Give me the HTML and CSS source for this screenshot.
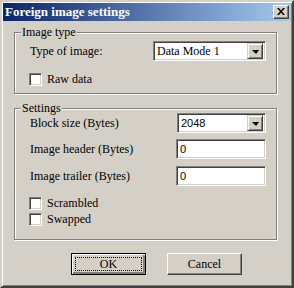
FILE: index.html
```html
<!DOCTYPE html>
<html lang="en">
<head>
  <meta charset="UTF-8" />
  <title>Foreign image settings</title>
  <link rel="stylesheet" href="styles.css">
</head>
<body>
  <div class="window">
    <div class="title-bar">
      <span class="title">Foreign image settings</span>
      <button class="close-btn" aria-label="Close">
        <svg width="8" height="7" viewBox="0 0 8 7"><path d="M0 0h2l2 2.5L6 0h2L5 3.5 8 7H6L4 4.5 2 7H0l3-3.5z" fill="#000"/></svg>
      </button>
    </div>

    <div class="content">
      <div class="group group-type">
        <div class="legend">Image type</div>
        <div class="row row-first">
          <span class="label">Type of image:</span>
          <div class="combo combo-wide">
            <span class="combo-value serif">Data Mode 1</span>
            <span class="combo-btn"><span class="arrow"></span></span>
          </div>
        </div>
        <label class="check check-raw"><span class="box"></span>Raw data</label>
      </div>

      <div class="group group-settings">
        <div class="legend">Settings</div>
        <div class="row row-block">
          <span class="label">Block size (Bytes)</span>
          <div class="combo">
            <span class="combo-value">2048</span>
            <span class="combo-btn"><span class="arrow"></span></span>
          </div>
        </div>
        <div class="row row-header">
          <span class="label">Image header (Bytes)</span>
          <div class="field">0</div>
        </div>
        <div class="row row-trailer">
          <span class="label">Image trailer (Bytes)</span>
          <div class="field">0</div>
        </div>
        <label class="check check-scrambled"><span class="box"></span>Scrambled</label>
        <label class="check check-swapped"><span class="box"></span>Swapped</label>
      </div>

      <div class="buttons">
        <button class="btn btn-default"><span class="focus">OK</span></button>
        <button class="btn">Cancel</button>
      </div>
    </div>
  </div>
</body>
</html>
```

FILE: styles.css
```css
:root {
  --face: #d4d0c8;
  --shadow: #808080;
  --dark: #404040;
  --light: #ffffff;
}

html, body {
  margin: 0;
  padding: 0;
  background: var(--face);
}

body {
  font-family: "Liberation Serif", "Times New Roman", serif;
  font-size: 12px;
  color: #000;
}

.window {
  width: 294px;
  height: 288px;
  box-sizing: border-box;
  background: var(--face);
  border: 2px solid;
  border-color: var(--face) var(--dark) var(--dark) var(--face);
  box-shadow: inset 1px 1px 0 var(--light), inset -1px -1px 0 var(--shadow);
  padding: 1px;
}

.title-bar {
  height: 18px;
  display: flex;
  align-items: center;
  justify-content: space-between;
  padding: 0 2px;
  background: linear-gradient(to right, #0a246a, #a6caf0);
}

.title {
  color: #fff;
  font-weight: bold;
  font-size: 13px;
  line-height: 18px;
  white-space: nowrap;
}

.close-btn {
  width: 16px;
  height: 14px;
  box-sizing: border-box;
  padding: 0;
  margin: 0;
  display: flex;
  align-items: center;
  justify-content: center;
  background: var(--face);
  border: 1px solid;
  border-color: var(--light) var(--dark) var(--dark) var(--light);
  box-shadow: inset -1px -1px 0 var(--shadow);
}

.close-btn svg {
  display: block;
  margin: 0 1px 1px 0;
}

.content {
  padding: 11px 14px 0 11px;
}

.group {
  border: 1px solid var(--shadow);
  box-shadow: inset 1px 1px 0 var(--light), 1px 1px 0 var(--light);
  box-sizing: border-box;
}

.group-type {
  height: 62px;
}

.group-settings {
  height: 132px;
  margin-top: 14px;
}

.legend {
  display: table;
  height: 14px;
  line-height: 14px;
  margin: -8px 0 -6px 6px;
  padding: 0 1px;
  background: var(--face);
}

.row {
  display: flex;
  align-items: center;
  justify-content: space-between;
  height: 20px;
  padding: 0 10px 0 15px;
}

.row-first { margin-top: 8px; }
.row-block { margin-top: 4px; }
.row-header { margin-top: 6px; }
.row-trailer { margin-top: 7px; }

.label {
  white-space: nowrap;
}

.combo, .field {
  height: 20px;
  box-sizing: border-box;
  background: #fff;
  border: 1px solid;
  border-color: var(--shadow) var(--light) var(--light) var(--shadow);
  box-shadow: inset 1px 1px 0 var(--dark), inset -1px -1px 0 var(--face);
  display: flex;
  align-items: center;
}

.combo {
  width: 89px;
  padding: 2px;
}

.combo-wide {
  width: 113px;
}

.combo-value, .field {
  font-family: "Liberation Sans", Arial, sans-serif;
  font-size: 11px;
}

.combo-value {
  flex: 1;
  padding-left: 1px;
}

.combo-value.serif {
  font-family: "Liberation Serif", "Times New Roman", serif;
  font-size: 12px;
}

.combo-btn {
  width: 16px;
  height: 16px;
  box-sizing: border-box;
  background: var(--face);
  border: 1px solid;
  border-color: var(--face) var(--dark) var(--dark) var(--face);
  box-shadow: inset 1px 1px 0 var(--light), inset -1px -1px 0 var(--shadow);
  display: flex;
  align-items: center;
  justify-content: center;
}

.arrow {
  width: 0;
  height: 0;
  border-left: 4px solid transparent;
  border-right: 3px solid transparent;
  border-top: 4px solid #000;
  margin-top: 1px;
}

.field {
  width: 90px;
  padding: 0 3px;
}

.check {
  display: flex;
  align-items: center;
  height: 13px;
  padding-left: 14px;
  white-space: nowrap;
}

.check-raw { margin-top: 12px; }
.check-scrambled { margin-top: 11px; }
.check-swapped { margin-top: 3px; }

.box {
  width: 13px;
  height: 13px;
  box-sizing: border-box;
  background: #fff;
  border: 1px solid;
  border-color: var(--shadow) var(--light) var(--light) var(--shadow);
  box-shadow: inset 1px 1px 0 var(--dark), inset -1px -1px 0 var(--face);
  margin-right: 5px;
  flex-shrink: 0;
}

.buttons {
  display: flex;
  gap: 21px;
  margin-top: 13px;
  padding-left: 57px;
}

.btn {
  width: 75px;
  height: 22px;
  box-sizing: border-box;
  padding: 0;
  font: inherit;
  font-size: 12px;
  color: #000;
  background: var(--face);
  border: 1px solid;
  border-color: var(--light) var(--dark) var(--dark) var(--light);
  box-shadow: inset -1px -1px 0 var(--shadow);
}

.btn-default {
  border: 1px solid #000;
  box-shadow: inset 1px 1px 0 var(--light), inset -2px -2px 0 var(--shadow), inset -1px -1px 0 var(--dark);
  padding: 3px;
}

.focus {
  display: flex;
  align-items: center;
  justify-content: center;
  height: 100%;
  box-sizing: border-box;
  border: 1px dotted #000;
}
```
